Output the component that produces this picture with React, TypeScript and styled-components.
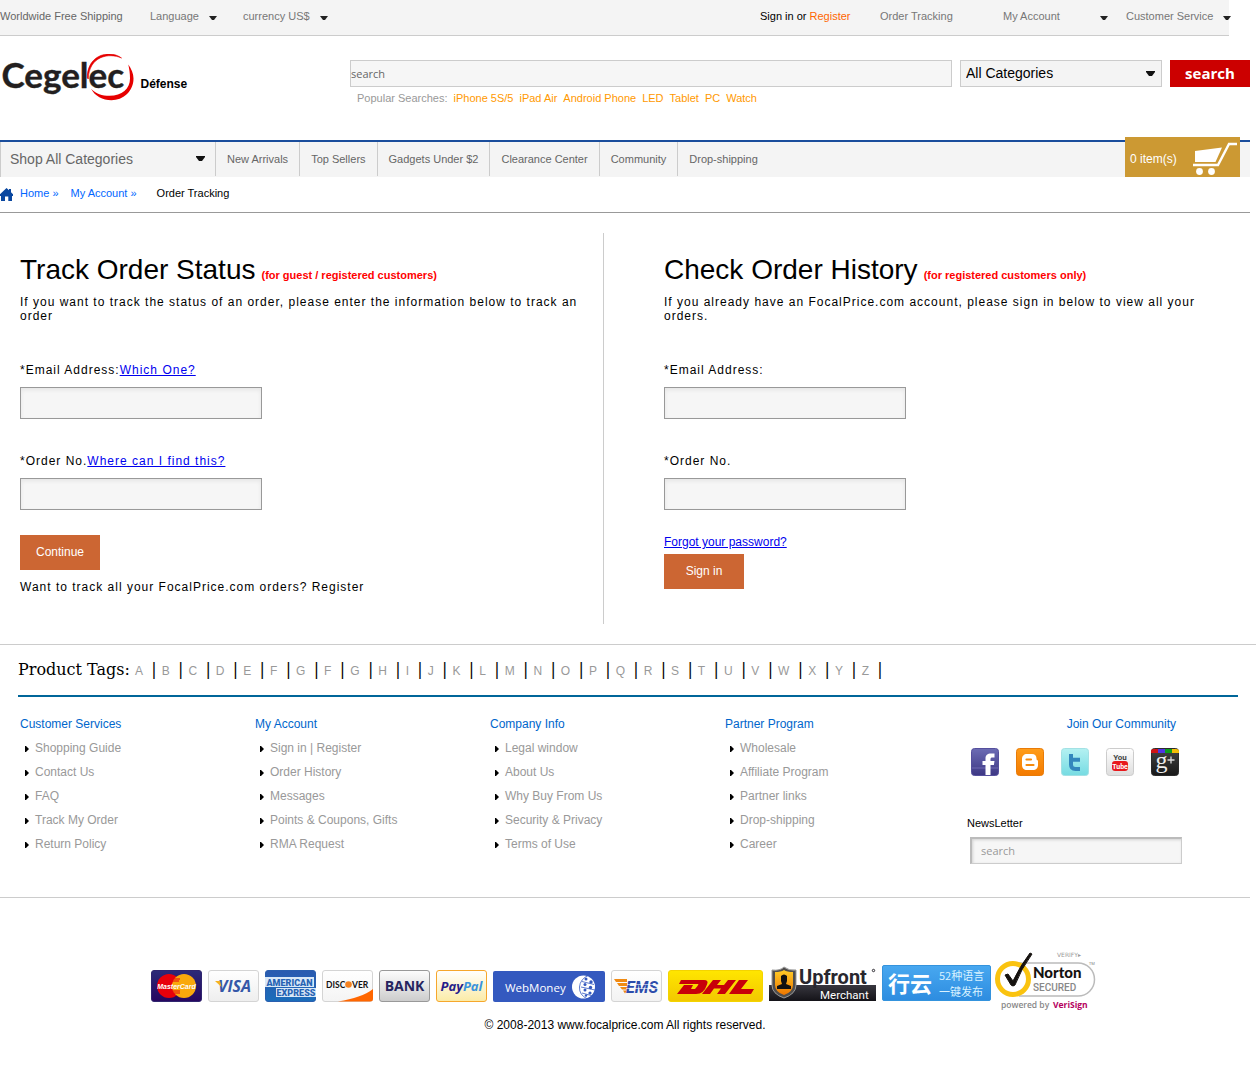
import React from "react";
import styled, { createGlobalStyle } from "styled-components";

const sans = '"Liberation Sans", Arial, sans-serif';
const humanist = '"Open Sans", "Noto Sans", sans-serif';

const GlobalStyle = createGlobalStyle`
  *, *::before, *::after { box-sizing: border-box; }
  body { margin: 0; background: #fff; color: #000; font: 12px/14px ${sans}; }
  a { text-decoration: none; }
  ul { list-style: none; margin: 0; padding: 0; }
  button, input, select { font-family: inherit; margin: 0; border-radius: 0; }
  svg { display: block; flex: none; }
`;

/* ---------- top bar ---------- */

const TopBar = styled.div`
  display: flex;
  height: 36px;
  margin-right: 27px;
  padding-bottom: 4px;
  background: #f4f4f4;
  border-bottom: 1px solid #ccc;
  font-size: 11px;
  color: #666;
`;

const TopCell = styled.div<{ $width: number; $push?: boolean }>`
  display: flex;
  align-items: center;
  flex: none;
  width: ${(p) => p.$width}px;
  margin-left: ${(p) => (p.$push ? "auto" : "0")};
  white-space: nowrap;
`;

const TopLink = styled.a`
  color: #777;
`;

const TopMenu = styled.button<{ $wide?: boolean }>`
  display: flex;
  justify-content: space-between;
  align-items: center;
  gap: 10px;
  min-width: ${(p) => (p.$wide ? "105px" : "0")};
  padding: 0;
  border: 0;
  background: none;
  color: #777;
  font-size: 11px;
  line-height: 14px;
  white-space: nowrap;
  cursor: pointer;
  svg { margin-top: 4px; }
`;

const SignIn = styled.a`
  color: #000;
`;

const Register = styled.a`
  color: #f60;
`;

/* ---------- header ---------- */

const Header = styled.header`
  display: grid;
  grid-template-columns: 350px 1fr;
  height: 104px;
  margin-right: 6px;
`;

const LogoLink = styled.a`
  padding-top: 18px;
`;

const SearchArea = styled.div`
  padding-top: 24px;
`;

const SearchForm = styled.form`
  display: flex;
  gap: 8px;
  height: 27px;
`;

const SearchInput = styled.input`
  flex: 1;
  min-width: 0;
  padding: 0;
  border: 1px solid #ccc;
  background: #f6f6f6;
  font: 11px/14px ${humanist};
  &::placeholder { color: #666; opacity: 1; }
`;

const SelectWrap = styled.div`
  position: relative;
  width: 202px;
  svg { position: absolute; right: 7px; top: 11px; pointer-events: none; }
`;

const CategorySelect = styled.select`
  appearance: none;
  width: 100%;
  height: 100%;
  padding: 0 20px 2px 5px;
  border: 1px solid #ccc;
  background: #f4f4f4;
  color: #000;
  font-size: 14px;
`;

const SearchButton = styled.button`
  width: 80px;
  padding: 0 0 2px;
  border: 0;
  background: #c00;
  color: #fff;
  font: bold 15px/20px ${humanist};
`;

const Popular = styled.div`
  display: flex;
  gap: 6px;
  margin-top: 4px;
  padding-left: 7px;
  font-size: 11px;
  color: #999;
  a { color: #f90; }
`;

/* ---------- navigation ---------- */

const Nav = styled.nav`
  display: flex;
  height: 37px;
  margin-right: 6px;
  border-top: 2px solid #1a4d9c;
  background: #f4f4f4;
  font-size: 11px;
`;

const NavLink = styled.a`
  display: flex;
  align-items: center;
  height: 34px;
  padding: 0 11px;
  border-left: 1px solid #ccc;
  color: #666;
  white-space: nowrap;
`;

const ShopMenu = styled.button`
  display: flex;
  justify-content: space-between;
  align-items: center;
  width: 215px;
  padding: 0 10px 2px 9px;
  border: 0;
  border-left: 1px solid #ccc;
  background: none;
  color: #666;
  font-size: 14px;
  cursor: pointer;
`;

const Cart = styled.a`
  display: flex;
  justify-content: space-between;
  align-items: center;
  width: 115px;
  height: 40px;
  margin: -5px 10px 0 auto;
  padding: 3px 2px 0 5px;
  background: #c93;
  color: #fff;
  font-size: 12px;
`;

const Crumbs = styled.nav`
  display: flex;
  height: 36px;
  margin-right: 6px;
  padding-top: 9px;
  border-bottom: 1px solid #999;
  font-size: 11px;
  a { color: #06f; }
`;

const HomeCrumb = styled.a`
  display: flex;
  gap: 7px;
  margin-right: 12px;
  svg { margin-top: 2px; }
`;

const CurrentCrumb = styled.span`
  margin-left: 20px;
`;

/* ---------- order panels ---------- */

const Panels = styled.main`
  display: grid;
  grid-template-columns: 604fr 652fr;
  padding: 20px 0;
`;

const Panel = styled.section<{ $divided?: boolean; $indent: number }>`
  display: flex;
  flex-direction: column;
  align-items: flex-start;
  padding: 20px 20px 30px ${(p) => p.$indent}px;
  border-right: ${(p) => (p.$divided ? "1px solid #ccc" : "0")};
`;

const Title = styled.h1`
  margin: 0 0 8px;
  font-size: 28px;
  line-height: 34px;
  font-weight: normal;
  white-space: nowrap;
`;

const TitleNote = styled.small`
  margin-left: 6px;
  color: #f00;
  font-size: 11px;
  line-height: 14px;
  font-weight: bold;
`;

const Lead = styled.p`
  margin: 0 0 40px;
  letter-spacing: 1px;
`;

const FieldLabel = styled.div`
  margin-bottom: 10px;
  letter-spacing: 1px;
  a { color: #00e; text-decoration: underline; }
`;

const Field = styled.input<{ $last?: boolean }>`
  width: 242px;
  height: 32px;
  margin-bottom: ${(p) => (p.$last ? 25 : 35)}px;
  padding: 0 8px;
  border: 1px solid #999;
  background: #f6f6f6;
  box-shadow: inset 0 2px 4px rgba(0, 0, 0, 0.07);
`;

const ActionButton = styled.button`
  width: 80px;
  height: 35px;
  padding: 0 0 2px;
  border: 0;
  background: #c63;
  color: #fff;
  font-size: 12px;
`;

const PanelNote = styled.p`
  margin: 10px 0 0;
  letter-spacing: 1px;
`;

const ForgotLink = styled.a`
  margin-bottom: 5px;
  color: #00e;
  text-decoration: underline;
`;

/* ---------- tags and footer ---------- */

const Tags = styled.div`
  padding: 15px 18px 0;
  border-top: 1px solid #ccc;
  font: 16px/19px "DejaVu Serif", serif;
`;

const TagLine = styled.div`
  padding-bottom: 16px;
  border-bottom: 2px solid #069;
`;

const TagLink = styled.a`
  padding: 0 5px;
  color: #999;
  font: 12px/14px ${sans};
`;

const FooterColumns = styled.footer`
  display: flex;
  margin-right: 6px;
  padding: 15px 68px 0 20px;
  height: 201px;
  border-bottom: 1px solid #ccc;
`;

const FooterColumn = styled.div`
  width: 235px;
  line-height: 24px;
`;

const FooterTitle = styled.h2`
  margin: 0;
  color: #06c;
  font-size: 12px;
  line-height: 24px;
  font-weight: normal;
`;

const FooterLink = styled.a`
  display: flex;
  align-items: center;
  gap: 6px;
  padding-left: 5px;
  color: #999;
  svg { margin-top: 2px; }
`;

const Community = styled.div`
  width: 215px;
  margin-left: auto;
  h2 { padding-right: 6px; text-align: right; }
`;

const SocialRow = styled.div`
  display: flex;
  gap: 17px;
  margin: 12px 0 40px 4px;
`;

const NewsLabel = styled.label`
  display: block;
  margin-bottom: 7px;
  font-size: 11px;
`;

const NewsInput = styled.input`
  display: block;
  width: 212px;
  height: 27px;
  margin-left: 3px;
  padding: 0 9px 2px;
  border: 1px solid #ccc;
  border-width: 2px 1px 1px 2px;
  border-color: #bbb #ccc #ccc #bbb;
  background: #f6f6f6;
  box-shadow: inset 1px 1px 3px rgba(0, 0, 0, 0.15);
  font: 11px/14px ${humanist};
  &::placeholder { color: #999; opacity: 1; }
`;

const Payments = styled.div`
  display: flex;
  justify-content: center;
  gap: 6px;
  margin: 54px 6px 0 0;
  svg { overflow: visible; }
`;

const Copyright = styled.p`
  margin: 6px 6px 40px 0;
  text-align: center;
`;

/* ---------- drawings ---------- */

const SmallArrow = () => (
  <svg width="8" height="4" viewBox="0 0 8 4" aria-hidden="true">
    <path d="M0 0h8L5 4H3z" fill="#222" />
  </svg>
);

const BigArrow = () => (
  <svg width="9" height="5" viewBox="0 0 9 5" aria-hidden="true">
    <path d="M0 0h9v1L6 5H3L0 1z" fill="#111" />
  </svg>
);

const Bullet = () => (
  <svg width="4" height="6" viewBox="0 0 4 6" aria-hidden="true">
    <path d="M0 0h1l3 3-3 3H0z" fill="#000" />
  </svg>
);

const Logo = () => (
  <svg width="190" height="48" viewBox="0 54 190 48" role="img" aria-label="Cegelec Défense">
    <path d="M87.300 78C87 63 97 54 109 54c5 0 9 1.500 12.500 4C109 52.500 89 56 88.300 79z" fill="#e60000" stroke="#e60000" strokeWidth=".6" />
    <path d="M128.300 64.500c3 4 5.200 9 5.200 14 0 13-10.500 21.700-22 21.700-9 0-16.500-4-20.500-11.400 5 5.200 11 7 18.500 7 12.500 0 20.500-7 20.500-17.300 0-5-.7-9.500-1.700-14z" fill="#e60000" />
    <text x="1.500" y="88" fontFamily="Lato, sans-serif" fontWeight="700" fontSize="35" fill="#231f20" stroke="#231f20" strokeWidth=".4">Cegelec</text>
    <text x="140.500" y="88" fontFamily="Liberation Sans, sans-serif" fontWeight="700" fontSize="12" fill="#000">Défense</text>
  </svg>
);

const HomeIcon = () => (
  <svg width="13" height="13" viewBox="0 0 13 13" aria-hidden="true">
    <path d="M6.500 0 9 2.300V1h2v3.200l2 2V8h-1v5H8.300V8.500H5V13H1V8H0V6.200z" fill="#0a47a0" />
  </svg>
);

const CartIcon = () => (
  <svg width="46" height="34" viewBox="0 0 46 34" aria-hidden="true">
    <path d="M3 9 30 5.500 23.500 20H3z" fill="#fff" />
    <path d="M45 2h-8L26 23H1" fill="none" stroke="#fff" strokeWidth="2.400" />
    <circle cx="7.500" cy="29.500" r="3.400" fill="#fff" />
    <circle cx="19.500" cy="29.500" r="3.400" fill="#fff" />
  </svg>
);

const Grad = ({ id, from, to }: { id: string; from: string; to: string }) => (
  <linearGradient id={id} x1="0" y1="0" x2="0" y2="1">
    <stop offset="0" stopColor={from} />
    <stop offset="1" stopColor={to} />
  </linearGradient>
);

const Tile = ({ name, from, to, stroke, children }: { name: string; from: string; to: string; stroke: string; children: React.ReactNode }) => (
  <svg width="28" height="28" viewBox="0 0 28 28" role="img" aria-label={name}>
    <defs><Grad id={"tile-" + name} from={from} to={to} /></defs>
    <rect x=".5" y=".5" width="27" height="27" rx="3" fill={`url(#tile-${name})`} stroke={stroke} />
    {children}
  </svg>
);

const socials = [
  <Tile name="Facebook" from="#6c6cb4" to="#3d3784" stroke="#554f9d">
    <path d="M1 20h26" stroke="#7873bb" strokeWidth=".8" />
    <path d="M14.500 27V17H11.500v-4h3v-2.500C14.500 7 16.500 5.500 20 5.500h3.500v4h-2c-1.500 0-2 .5-2 1.800V13h4l-.6 4h-3.400v10z" fill="#fff" />
  </Tile>,
  <Tile name="Blogger" from="#ff9d1a" to="#f37a00" stroke="#e87b08">
    <path d="M11 6h5c3 0 4.500 2 4.500 4.500 0 1.300.4 2 1.500 2V17c0 3-2 5-5 5h-6c-3 0-5-2-5-5v-6c0-3 2-5 5-5z" fill="#fff" />
    <path d="M10.500 11.500h4.500M10.500 17h7" stroke="#f68a0c" strokeWidth="2.200" strokeLinecap="round" />
  </Tile>,
  <Tile name="Twitter" from="#b4f1f2" to="#76dbe2" stroke="#a3e1e4">
    <path d="M10 6v10.500c0 3 1.500 4.500 4.500 4.500H19M10 11.800h9" fill="none" stroke="#3387bd" strokeWidth="4" strokeLinejoin="round" />
  </Tile>,
  <Tile name="YouTube" from="#fff" to="#ddd" stroke="#ccc">
    <text x="14" y="11.500" textAnchor="middle" fontFamily="Roboto, sans-serif" fontSize="8" fontWeight="700" fill="#444">You</text>
    <rect x="6" y="13" width="16" height="10" rx="3" fill="#e8191d" />
    <text x="14" y="21" textAnchor="middle" fontFamily="Roboto, sans-serif" fontSize="7" fontWeight="700" fill="#fff">Tube</text>
  </Tile>,
  <Tile name="GooglePlus" from="#444" to="#181818" stroke="#2b2b2b">
    <path d="M0 5V3q0-2 3-2h4v4z" fill="#d01414" />
    <path d="M7 1h7v4H7z" fill="#5034e4" />
    <path d="M14 1h7v4h-7z" fill="#0b9d1b" />
    <path d="M21 1h4q3 0 3 2v2h-7z" fill="#f5be05" />
    <text x="4.500" y="19.500" fontFamily="Liberation Serif, serif" fontSize="24" fill="#eee">g</text>
    <path d="M16.500 12h7M20 8.500v7" stroke="#ddd" strokeWidth="1.300" />
  </Tile>,
];

const Badge = ({ name, width, children }: { name: string; width: number; children: React.ReactNode }) => (
  <svg width={width} height="60" viewBox={`0 -18 ${width} 60`} role="img" aria-label={name}>{children}</svg>
);

const Card = ({ id, width = 51, from, to, stroke }: { id: string; width?: number; from: string; to: string; stroke: string }) => (
  <>
    <defs><Grad id={id} from={from} to={to} /></defs>
    <rect x=".5" y=".5" width={width - 1} height="31" rx="2.500" fill={`url(#${id})`} stroke={stroke} />
  </>
);

const PaymentBadges = () => (
  <>
    <Badge name="MasterCard" width={51}>
      <Card id="mc" from="#2c2a78" to="#26065f" stroke="#30256f" />
      <circle cx="18" cy="16" r="12" fill="#e8000b" />
      <circle cx="33" cy="16" r="12" fill="#f9a80c" />
      <path d="M22 9h7M21 11h7M22 21h7M23 23h6" stroke="#e8000b" />
      <text x="25.500" y="19" textAnchor="middle" fontFamily="Liberation Sans, sans-serif" fontSize="7" fontWeight="700" fontStyle="italic" fill="#fff">MasterCard</text>
    </Badge>
    <Badge name="Visa" width={51}>
      <Card id="visa" from="#fff" to="#eee" stroke="#d4d4d4" />
      <text x="26.500" y="22" textAnchor="middle" fontFamily="Open Sans, sans-serif" fontSize="16" fontWeight="700" fontStyle="italic" fill="#3558a8">VISA</text>
      <path d="M7 11h5l1.500 6z" fill="#f5b321" />
    </Badge>
    <Badge name="American Express" width={51}>
      <Card id="amex" from="#2a5ab0" to="#1b6dba" stroke="#2a5faf" />
      <path d="M0 7h49v10H0zM11 18h40v9H11z" fill="#d9e8f7" />
      <text x="24.500" y="15.500" textAnchor="middle" fontFamily="Roboto, sans-serif" fontSize="9" fontWeight="900" fill="#2763b3">AMERICAN</text>
      <text x="31" y="25.700" textAnchor="middle" fontFamily="Roboto, sans-serif" fontSize="9" fontWeight="900" fill="#2763b3">EXPRESS</text>
    </Badge>
    <Badge name="Discover" width={51}>
      <Card id="disc" from="#fff" to="#f4f4f4" stroke="#d4d4d4" />
      <path d="M16 31.500C32 29 43 25 51 19v10q0 2.500-3 2.500z" fill="#ff6600" />
      <text x="4" y="17.500" fontFamily="Lato, sans-serif" fontSize="8.500" fontWeight="700" fill="#111">DISC</text>
      <circle cx="26.500" cy="14.500" r="3.300" fill="#f58220" />
      <text x="30" y="17.500" fontFamily="Lato, sans-serif" fontSize="8.500" fontWeight="700" fill="#111">VER</text>
    </Badge>
    <Badge name="Bank" width={51}>
      <Card id="bank" from="#fdfdfd" to="#ccc" stroke="#999" />
      <text x="25.500" y="21" textAnchor="middle" fontFamily="Open Sans, sans-serif" fontSize="14" fontWeight="700" fill="#26255f">BANK</text>
    </Badge>
    <Badge name="PayPal" width={51}>
      <Card id="pp" from="#fff" to="#fbeba6" stroke="#f6a72c" />
      <text x="25.500" y="21" textAnchor="middle" fontFamily="Open Sans, sans-serif" fontSize="13" fontWeight="700" fontStyle="italic" fill="#261e8c">Pay<tspan fill="#3a93dd">Pal</tspan></text>
    </Badge>
    <Badge name="WebMoney" width={112}>
      <rect y="1" width="112" height="31" rx="2" fill="#3459bf" />
      <text x="12" y="21.500" fontFamily="Open Sans, sans-serif" fontSize="11.500" fill="#fff">WebMoney</text>
      <circle cx="90.500" cy="17" r="11.500" fill="#fff" />
      <g fill="#3459bf">
        <circle cx="93" cy="9" r="1.500" /><circle cx="98" cy="12" r="1.700" /><circle cx="92" cy="14.500" r="1.500" />
        <circle cx="97.500" cy="17.500" r="1.700" /><circle cx="92" cy="20" r="1.500" /><circle cx="97" cy="23" r="1.600" />
        <circle cx="93" cy="25.500" r="1.200" />
      </g>
      <path d="M96 5q-9 4-9.500 12t8 12M101 14.500l-12-3M102 20l-14-3M100 26l-11-3" fill="none" stroke="#3459bf" strokeWidth=".8" />
    </Badge>
    <Badge name="EMS" width={51}>
      <Card id="ems" from="#fff" to="#f2f2f2" stroke="#d4d4d4" />
      <path d="M3 9h13v3H5zM6 13h10v3H8zM9 17h7v2.500h-5zM12 20.500h4l-2 3z" fill="#f08a12" />
      <text x="31" y="22.500" textAnchor="middle" fontFamily="Roboto, sans-serif" fontSize="16" fontWeight="700" fontStyle="italic" fill="#2c4cab">EMS</text>
      <path d="M16 14.500h32M15 18.500h32" stroke="#fff" strokeWidth=".6" />
    </Badge>
    <Badge name="DHL" width={95}>
      <Card id="dhl" width={95} from="#ffe600" to="#f2c800" stroke="#f4d400" />
      <g fill="#c8000a">
        <path d="M13 10h23q5 0 3 4.500Q36 24 28 24H9l7-9h9l-2 4h4q3-3 3.500-5H11z" />
        <path d="M45 10h8l-4 5h7l4-5h8L57 24h-8l4-5.500h-7L42 24h-8z" />
        <path d="M71 10h9l-7 9h13l-3 5H61z" />
      </g>
    </Badge>
    <Badge name="Upfront Merchant" width={107}>
      <defs>
        <Grad id="merchant" from="#38373f" to="#141318" />
        <Grad id="shield" from="#ffcc27" to="#ee7600" />
      </defs>
      <path d="M0 15h107v16H0z" fill="url(#merchant)" />
      <path d="M3 0q8 1 12-3 5 4 12 3v15q0 9-12 13Q3 24 3 15z" fill="#504e4d" stroke="#999" />
      <path d="M6 2q6 0 9-2 3 2 9 2v13q0 7-9 10Q6 22 6 15z" fill="url(#shield)" />
      <path d="M12 6q3-3 6 0v5l-1 3 5 2v3H8v-3l5-2-1-3z" fill="#111" />
      <text x="30" y="13.500" fontFamily="Roboto, sans-serif" fontSize="20" fontWeight="700" fill="#29272e">Upfront</text>
      <circle cx="104.500" cy=".5" r="1.200" fill="none" stroke="#29272e" />
      <text x="51" y="28.500" fontFamily="Roboto, sans-serif" fontSize="11.500" fill="#fff">Merchant</text>
    </Badge>
    <Badge name="行云" width={109}>
      <defs><Grad id="xingyun" from="#48a8f0" to="#2d8ce0" /></defs>
      <rect x=".5" y="-4.500" width="108" height="35" rx="1.500" fill="url(#xingyun)" stroke="#3493dd" />
      <text x="6" y="21.500" fontFamily="Noto Sans CJK SC, sans-serif" fontSize="22" fontWeight="700" fill="#fff">行云</text>
      <text x="57" y="10" fontFamily="Noto Sans CJK SC, sans-serif" fontSize="11" fill="#d9f2ff">52种语言</text>
      <text x="57" y="26" fontFamily="Noto Sans CJK SC, sans-serif" fontSize="11" fill="#d9f2ff">一键发布</text>
    </Badge>
    <Badge name="Norton Secured" width={103}>
      <g transform="translate(-2 0)">
        <text x="62" y="-13" fontFamily="DejaVu Sans, sans-serif" fontSize="6" fill="#999">VERIFY▸</text>
        <path d="M24-7h59a16 16 0 0 1 0 33H24" fill="#fff" stroke="#bbb" strokeWidth="1.500" />
        <circle cx="18" cy="9" r="15.500" fill="#fff" stroke="#fac30f" strokeWidth="5" />
        <path d="m10 5 3-1 5 7Q25-4 35-17l2 1Q26-1 20 15q-2 2-4 0z" fill="#16120f" stroke="#16120f" />
        <text x="38" y="8" fontFamily="Lato, sans-serif" fontSize="15" fontWeight="900" fill="#16120f">Norton</text>
        <text x="38" y="20.500" fontFamily="Roboto, sans-serif" fontSize="10" fontWeight="500" fill="#888">SECURED</text>
        <text x="94" y="-5" fontFamily="Open Sans, sans-serif" fontSize="4" fill="#777">TM</text>
        <text x="6" y="38" fontFamily="Open Sans, sans-serif" fontSize="8.500" fontWeight="600" fill="#888">powered by</text>
        <text x="58" y="38" fontFamily="Open Sans, sans-serif" fontSize="8.500" fontWeight="700" fill="#b5005d">VeriSign</text>
      </g>
    </Badge>
  </>
);

/* ---------- data ---------- */

const popular = ["iPhone 5S/5", "iPad Air", "Android Phone", "LED", "Tablet", "PC", "Watch"];
const navItems = ["New Arrivals", "Top Sellers", "Gadgets Under $2", "Clearance Center", "Community", "Drop-shipping"];
const tags = "ABCDEFGFGHIJKLMNOPQRSTUVWXYZ".split("");
const footerColumns = [
  { title: "Customer Services", links: ["Shopping Guide", "Contact Us", "FAQ", "Track My Order", "Return Policy"] },
  { title: "My Account", links: ["Sign in | Register", "Order History", "Messages", "Points & Coupons, Gifts", "RMA Request"] },
  { title: "Company Info", links: ["Legal window", "About Us", "Why Buy From Us", "Security & Privacy", "Terms of Use"] },
  { title: "Partner Program", links: ["Wholesale", "Affiliate Program", "Partner links", "Drop-shipping", "Career"] },
];

export default function App() {
  return (
    <>
      <GlobalStyle />
      <TopBar>
        <TopCell $width={150}>Worldwide Free Shipping</TopCell>
        <TopCell $width={93}><TopMenu type="button">Language<SmallArrow /></TopMenu></TopCell>
        <TopCell $width={93}><TopMenu type="button">currency US$<SmallArrow /></TopMenu></TopCell>
        <TopCell $width={120} $push>
          <span><SignIn href="#">Sign in or </SignIn><Register href="#">Register</Register></span>
        </TopCell>
        <TopCell $width={123}><TopLink href="#">Order Tracking</TopLink></TopCell>
        <TopCell $width={123}><TopMenu type="button" $wide>My Account<SmallArrow /></TopMenu></TopCell>
        <TopCell $width={103}><TopMenu type="button" $wide>Customer Service<SmallArrow /></TopMenu></TopCell>
      </TopBar>

      <Header>
        <LogoLink href="#"><Logo /></LogoLink>
        <SearchArea>
          <SearchForm onSubmit={(e) => e.preventDefault()}>
            <SearchInput type="text" placeholder="search" aria-label="Search" />
            <SelectWrap>
              <CategorySelect aria-label="Category"><option>All Categories</option></CategorySelect>
              <BigArrow />
            </SelectWrap>
            <SearchButton type="submit">search</SearchButton>
          </SearchForm>
          <Popular>
            <span>Popular Searches:</span>
            {popular.map((p) => <a href="#" key={p}>{p}</a>)}
          </Popular>
        </SearchArea>
      </Header>

      <Nav>
        <ShopMenu type="button">Shop All Categories<BigArrow /></ShopMenu>
        {navItems.map((n) => <NavLink href="#" key={n}>{n}</NavLink>)}
        <Cart href="#">0 item(s)<CartIcon /></Cart>
      </Nav>
      <Crumbs aria-label="Breadcrumb">
        <HomeCrumb href="#"><HomeIcon />Home »</HomeCrumb>
        <a href="#">My Account »</a>
        <CurrentCrumb>Order Tracking</CurrentCrumb>
      </Crumbs>

      <Panels>
        <Panel $divided $indent={20}>
          <Title>Track Order Status<TitleNote>(for guest / registered customers)</TitleNote></Title>
          <Lead>If you want to track the status of an order, please enter the information below to track an order</Lead>
          <FieldLabel><label htmlFor="track-email">*Email Address:</label><a href="#">Which One?</a></FieldLabel>
          <Field id="track-email" type="text" />
          <FieldLabel><label htmlFor="track-order">*Order No.</label><a href="#">Where can I find this?</a></FieldLabel>
          <Field id="track-order" type="text" $last />
          <ActionButton type="button">Continue</ActionButton>
          <PanelNote>Want to track all your FocalPrice.com orders? Register</PanelNote>
        </Panel>
        <Panel $indent={60}>
          <Title>Check Order History<TitleNote>(for registered customers only)</TitleNote></Title>
          <Lead>If you already have an FocalPrice.com account, please sign in below to view all your orders.</Lead>
          <FieldLabel><label htmlFor="history-email">*Email Address:</label></FieldLabel>
          <Field id="history-email" type="text" />
          <FieldLabel><label htmlFor="history-order">*Order No.</label></FieldLabel>
          <Field id="history-order" type="text" $last />
          <ForgotLink href="#">Forgot your password?</ForgotLink>
          <ActionButton type="button">Sign in</ActionButton>
        </Panel>
      </Panels>

      <Tags>
        <TagLine>
          Product Tags:
          {tags.map((t, i) => (
            <React.Fragment key={i}><TagLink href="#">{t}{"\u00a0"}</TagLink>|</React.Fragment>
          ))}
        </TagLine>
      </Tags>

      <FooterColumns>
        {footerColumns.map((c) => (
          <FooterColumn key={c.title}>
            <FooterTitle>{c.title}</FooterTitle>
            <ul>
              {c.links.map((l) => <li key={l}><FooterLink href="#"><Bullet />{l}</FooterLink></li>)}
            </ul>
          </FooterColumn>
        ))}
        <Community>
          <FooterTitle>Join Our Community</FooterTitle>
          <SocialRow>
            {socials.map((icon, i) => <a href="#" key={i}>{icon}</a>)}
          </SocialRow>
          <NewsLabel htmlFor="newsletter">NewsLetter</NewsLabel>
          <NewsInput id="newsletter" type="text" placeholder="search" />
        </Community>
      </FooterColumns>

      <Payments><PaymentBadges /></Payments>
      <Copyright>© 2008-2013 www.focalprice.com All rights reserved.</Copyright>
    </>
  );
}
